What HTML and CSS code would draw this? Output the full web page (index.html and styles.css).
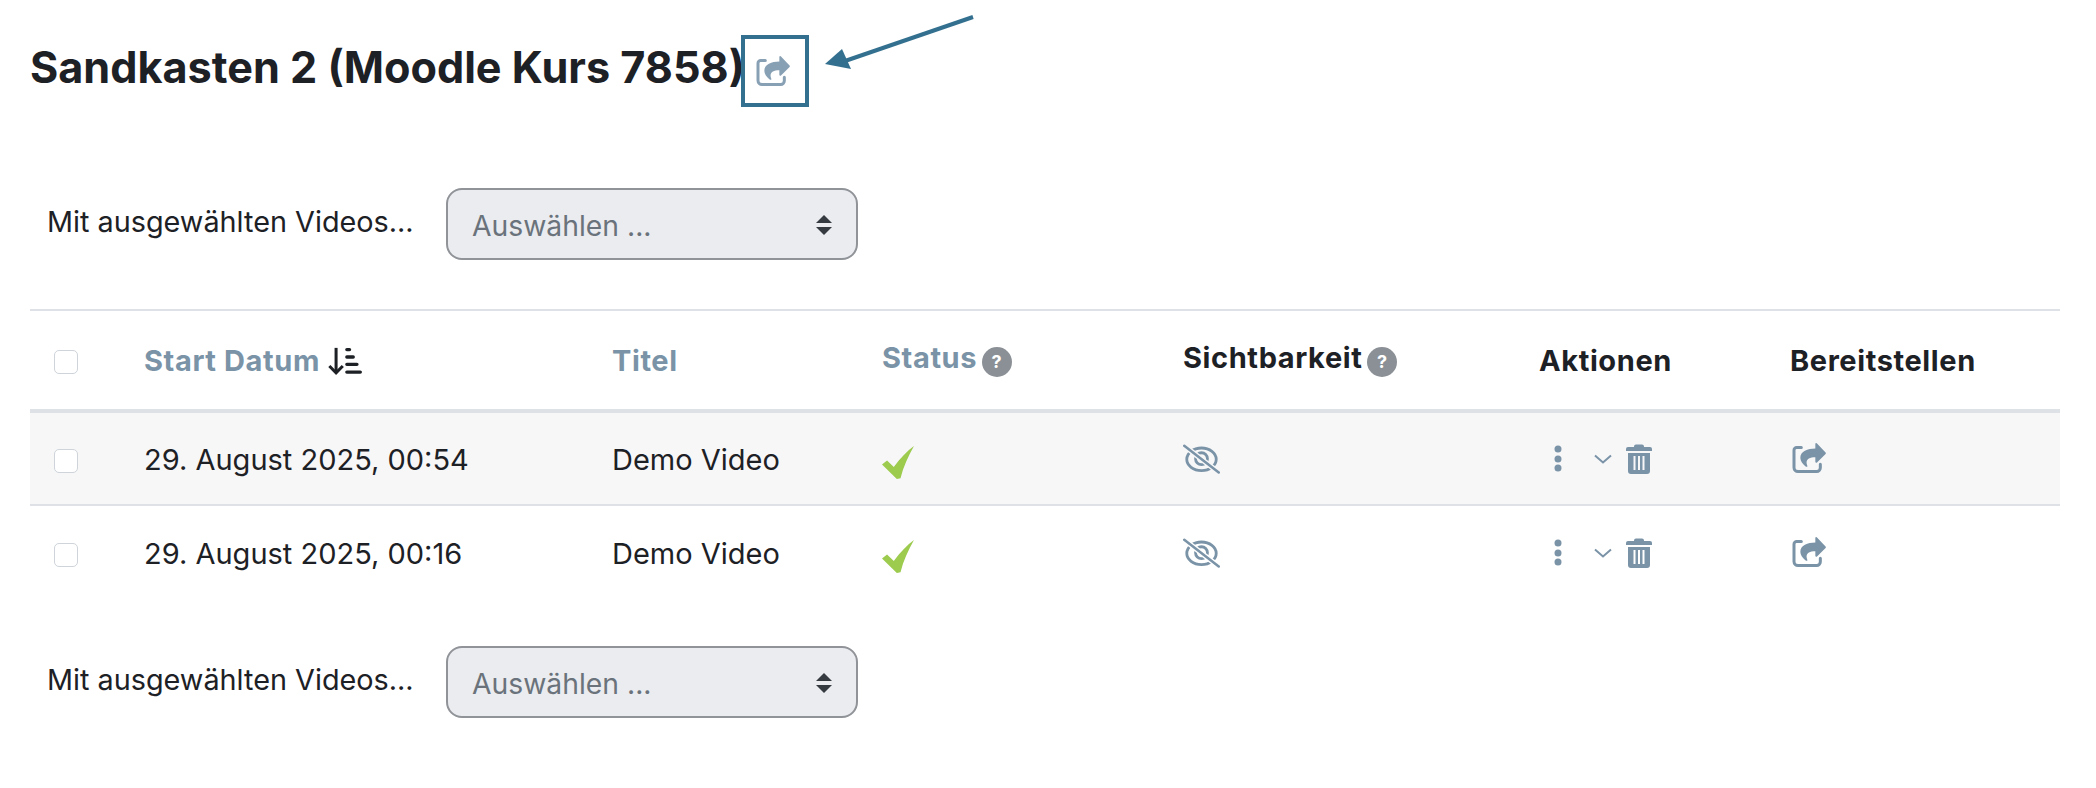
FILE: index.html
```html
<!DOCTYPE html>
<html lang="de">
<head>
<meta charset="utf-8">
<title>Sandkasten 2</title>
<link rel="stylesheet" href="styles.css">
</head>
<body>
<svg class="defs" width="0" height="0" aria-hidden="true">
  <symbol id="i-share" viewBox="36 42 102 92">
    <path d="M64 55H50a8 8 0 0 0-8 8v52a12 12 0 0 0 12 12h56a11 11 0 0 0 11-11v-11" fill="none" stroke="currentColor" stroke-width="9" stroke-linecap="round" stroke-linejoin="round"/>
    <path d="M106 44a3 3 0 0 1 5-1l25 26a4 4 0 0 1 0 6l-25 25a3 3 0 0 1-5-2V84c-18 0-28 6-26 19 1 5 3 8 2 9-1 2-3 1-6-1-9-6-15-16-15-25 0-20 22-28 45-28z" fill="currentColor"/>
  </symbol>
  <symbol id="i-eye" viewBox="38 42 118 94">
    <ellipse cx="97" cy="90" rx="47" ry="36" fill="none" stroke="currentColor" stroke-width="9"/>
    <circle cx="97" cy="88" r="19" fill="none" stroke="currentColor" stroke-width="9"/>
    <path d="M42 47 152 132" stroke="var(--gap,#fff)" stroke-width="17"/>
    <path d="M42 47 152 132" stroke="currentColor" stroke-width="8" stroke-linecap="round"/>
  </symbol>
  <symbol id="i-dots" viewBox="0 0 14 36">
    <circle cx="7" cy="8" r="3.5" fill="currentColor"/><circle cx="7" cy="18" r="3.5" fill="currentColor"/><circle cx="7" cy="27" r="3.5" fill="currentColor"/>
  </symbol>
  <symbol id="i-chevron" viewBox="0 0 18 10">
    <path d="M1 1.5 9 8.5 17 1.500" fill="none" stroke="currentColor" stroke-width="2"/>
  </symbol>
  <symbol id="i-trash" viewBox="0 0 26 30">
    <path d="M8 2.5a2 2 0 0 1 2-2h6a2 2 0 0 1 2 2V3h6a2 2 0 0 1 2 2v2H0V5a2 2 0 0 1 2-2h6z" fill="currentColor"/>
    <path fill-rule="evenodd" d="M2 9h22v18a3 3 0 0 1-3 3H5a3 3 0 0 1-3-3zM7.500 12v14h2V12zM12 12v14h2V12zM16.500 12v14h2V12z" fill="currentColor"/>
  </symbol>
  <symbol id="i-check" viewBox="70 50 95 98">
    <path d="M70 105 85 93 105 112C125 85 145 65 165 50 148 80 133 112 125 146L114 148z" fill="currentColor"/>
  </symbol>
  <symbol id="i-sort" viewBox="28 36 104 82">
    <path d="M52 38V110" stroke="currentColor" stroke-width="9" fill="none"/>
    <path d="M32 92 52 112 72 92" stroke="currentColor" stroke-width="9" fill="none"/>
    <path d="M84 43H92M84 65H103M84 87H114M84 110H124" stroke="currentColor" stroke-width="10" stroke-linecap="round" fill="none"/>
  </symbol>
  <symbol id="i-updown" viewBox="0 0 16 20">
    <path d="M8 0 16 8H0zM0 12H16L8 20z" fill="currentColor"/>
  </symbol>
</svg>

<main class="page">
  <header class="title-row">
    <h1 class="title">Sandkasten 2 (Moodle Kurs 7858)</h1>
    <span class="highlight"><svg class="title-share"><use href="#i-share"/></svg></span>
  </header>

  <form class="bulk bulk-top">
    <label class="bulk-label">Mit ausgewählten Videos...</label>
    <div class="select-wrap">
      <select class="select"><option>Auswählen ...</option></select>
      <svg class="updown"><use href="#i-updown"/></svg>
    </div>
  </form>

  <table class="videos">
    <colgroup>
      <col class="c1"><col class="c2"><col class="c3"><col class="c4"><col class="c5"><col class="c6"><col class="c7">
    </colgroup>
    <thead>
      <tr>
        <th class="box-cell"><span class="box"></span></th>
        <th class="link">Start Datum <svg class="sort"><use href="#i-sort"/></svg></th>
        <th class="link">Titel</th>
        <th class="link raised">Status <span class="help">?</span></th>
        <th class="raised">Sichtbarkeit <span class="help">?</span></th>
        <th>Aktionen</th>
        <th>Bereitstellen</th>
      </tr>
    </thead>
    <tbody>
      <tr class="shaded">
        <td class="box-cell"><span class="box"></span></td>
        <td class="text">29. August 2025, 00:54</td>
        <td class="text">Demo Video</td>
        <td class="check-cell"><svg class="check"><use href="#i-check"/></svg></td>
        <td class="icons"><svg class="eye"><use href="#i-eye"/></svg></td>
        <td class="icons"><div class="actions"><svg class="dots"><use href="#i-dots"/></svg><svg class="chev"><use href="#i-chevron"/></svg><svg class="trash"><use href="#i-trash"/></svg></div></td>
        <td class="icons"><svg class="share"><use href="#i-share"/></svg></td>
      </tr>
      <tr>
        <td class="box-cell"><span class="box"></span></td>
        <td class="text">29. August 2025, 00:16</td>
        <td class="text">Demo Video</td>
        <td class="check-cell"><svg class="check"><use href="#i-check"/></svg></td>
        <td class="icons"><svg class="eye"><use href="#i-eye"/></svg></td>
        <td class="icons"><div class="actions"><svg class="dots"><use href="#i-dots"/></svg><svg class="chev"><use href="#i-chevron"/></svg><svg class="trash"><use href="#i-trash"/></svg></div></td>
        <td class="icons"><svg class="share"><use href="#i-share"/></svg></td>
      </tr>
    </tbody>
  </table>

  <form class="bulk bulk-bottom">
    <label class="bulk-label">Mit ausgewählten Videos...</label>
    <div class="select-wrap">
      <select class="select"><option>Auswählen ...</option></select>
      <svg class="updown"><use href="#i-updown"/></svg>
    </div>
  </form>
</main>

<svg class="arrow" viewBox="0 0 160 60" aria-hidden="true">
  <path d="M148 4 20 48" stroke="#33708f" stroke-width="4" fill="none"/>
  <path d="M0 51 17 36 26 56z" fill="#33708f"/>
</svg>
</body>
</html>
```

FILE: styles.css
```css
* { box-sizing: border-box; }
html, body { margin: 0; padding: 0; background: #fff; }
body {
  font-family: Inter, "Liberation Sans", sans-serif;
  color: #1d2125;
  height: 788px;
  overflow: hidden;
  position: relative;
}
.defs { position: absolute; }
.page { padding: 35px 36px 0 30px; }

.title-row { display: flex; align-items: flex-start; height: 72px; }
.title { margin: 0; font-size: 43.200px; font-weight: 700; line-height: 64px; letter-spacing: 0; }
.highlight {
  width: 68px; height: 72px; margin-left: -4px;
  border: 4px solid #33708f;
  padding: 17px 0 0 11px;
  display: block;
}
.title-share { display: block; width: 34px; height: 31px; color: #88a0b4; }

.bulk { display: flex; align-items: flex-start; padding-left: 17px; }
.bulk-top { margin-top: 81px; }
.bulk-bottom { margin-top: 47px; }
.bulk-label { font-size: 28.800px; line-height: 36px; width: 399px; margin-top: 16px; flex: none; }
.select-wrap { position: relative; width: 412px; height: 72px; }
.select {
  appearance: none; -webkit-appearance: none;
  width: 100%; height: 100%;
  border: 2px solid #909398; border-radius: 16px;
  background: #eaecf0; color: #6a737b;
  font: 400 28.300px Inter, "Liberation Sans", sans-serif;
  padding: 4px 0 0 24px;
}
.updown { position: absolute; left: 370px; top: 27px; width: 16px; height: 20px; color: #343a40; }

.videos {
  table-layout: fixed; border-collapse: collapse;
  width: 2030px; margin-top: 49px;
  border-top: 2px solid #dee2e6;
  font-size: 29px;
}
.c1 { width: 114px; } .c2 { width: 468px; } .c3 { width: 270px; } .c4 { width: 301px; }
.c5 { width: 356px; } .c6 { width: 251px; } .c7 { width: 270px; }
.videos th, .videos td { padding: 0; text-align: left; vertical-align: middle; }
.videos th { height: 101px; font-weight: 700; border-bottom: 4px solid #dee2e6; white-space: nowrap; letter-spacing: .6px; }
.videos td { height: 94px; }
.videos th.box-cell, .videos td.box-cell { padding: 4px 0 0 24px; }
.videos td.text { padding-top: 2px; }
.shaded td { background: #f7f7f8; border-bottom: 2px solid #dee2e6; height: 94px; }
.link { color: #7a93a7; }
.videos th.raised { padding-bottom: 3px; }
.box {
  display: block; width: 24px; height: 24px;
  border: 1px solid #ced4da; border-radius: 5px; background: #fff;
}
.help {
  display: inline-block; width: 30px; height: 30px; border-radius: 50%;
  background: #8a9095; color: #fff;
  font-size: 18px; font-weight: 700; line-height: 30px; text-align: center;
  vertical-align: 0; letter-spacing: 0; margin-left: -3px;
}
.sort { width: 35px; height: 28px; color: #1d2125; vertical-align: -4px; margin-left: 1px; }
.videos td.check-cell { padding-top: 8px; }
.check { display: block; width: 32px; height: 33px; margin-left: 0; color: #9ccb4e; }
.icons { color: #7a93a7; }
.eye { display: block; width: 37px; height: 30px; --gap: #fff; }
.shaded .eye { --gap: #f7f7f8; }
.actions { display: flex; align-items: center; }
.dots { width: 14px; height: 36px; margin: 0 0 0 12px; }
.chev { width: 18px; height: 10px; margin-left: 29px; }
.trash { width: 26px; height: 30px; margin-left: 14px; }
.share { display: block; width: 34px; height: 31px; margin-left: 2px; }

.arrow { position: absolute; left: 825px; top: 13px; width: 160px; height: 60px; }
```
